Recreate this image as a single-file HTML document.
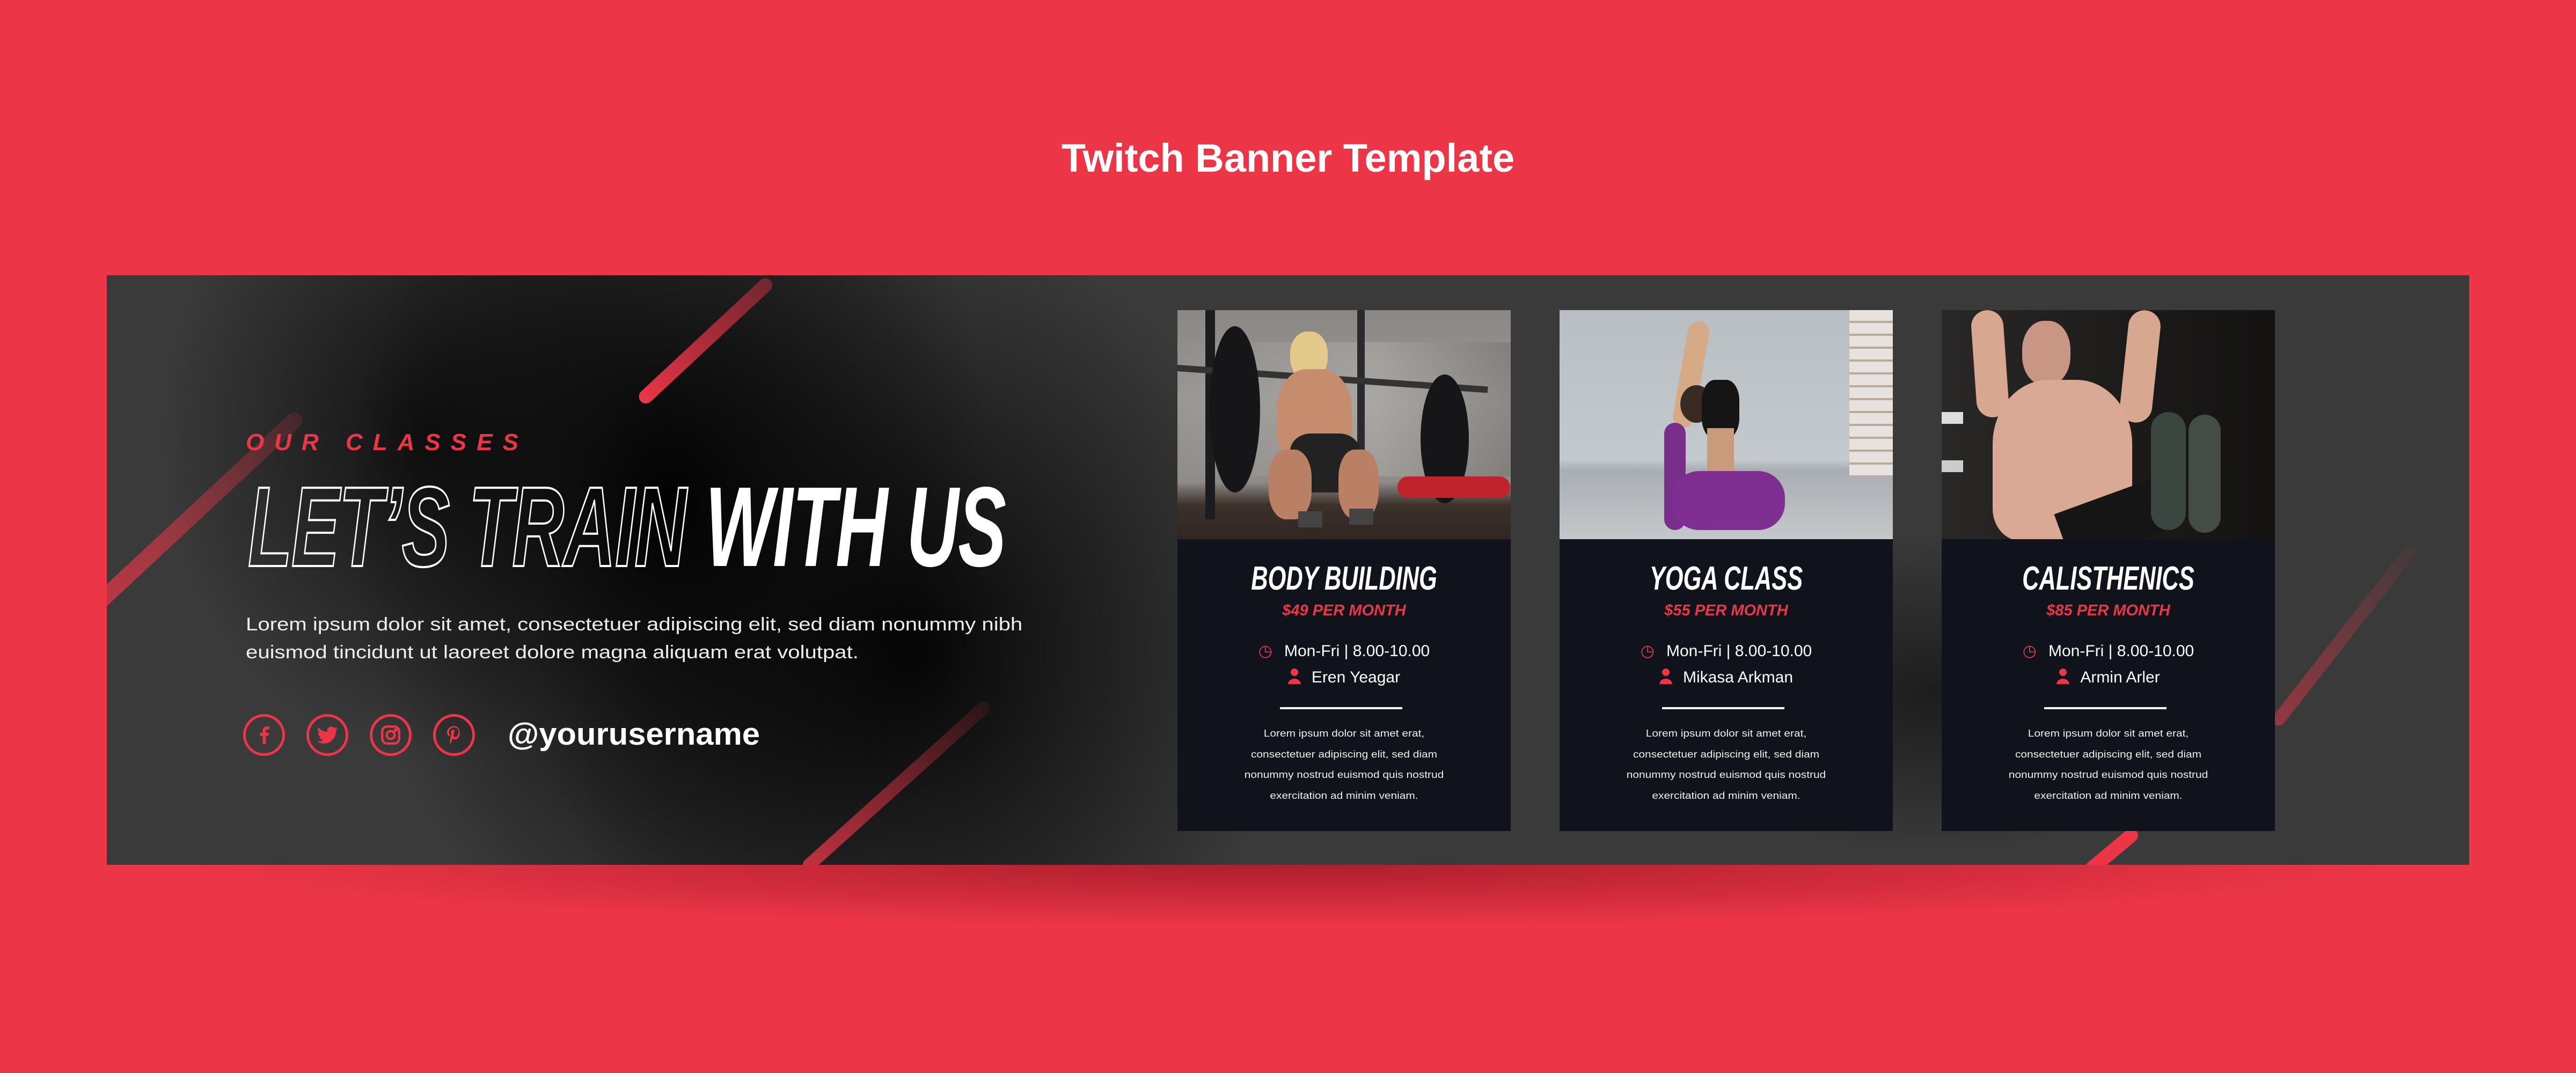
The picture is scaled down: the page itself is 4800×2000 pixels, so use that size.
<!DOCTYPE html>
<html><head><meta charset="utf-8">
<style>
*{margin:0;padding:0;box-sizing:border-box}
html,body{width:4800px;height:2000px;overflow:hidden;background:#ec3648;font-family:"Liberation Sans",sans-serif}
.title{position:absolute;left:0;width:4800px;top:252px;text-align:center;color:#fff;font-weight:bold;font-size:74px}
.shadow{position:absolute;left:300px;top:1560px;width:4200px;height:170px;background:radial-gradient(ellipse at 50% 30%,rgba(120,10,20,.55),rgba(120,10,20,0) 70%)}
.banner{position:absolute;left:199px;top:513px;width:4402px;height:1099px;overflow:hidden;
background:
radial-gradient(ellipse 600px 900px at 1050px 420px,rgba(0,0,0,.95),rgba(0,0,0,0) 100%),
radial-gradient(ellipse 700px 800px at 1500px 700px,rgba(0,0,0,.9),rgba(0,0,0,0) 100%),
radial-gradient(ellipse 500px 600px at 600px 300px,rgba(0,0,0,.7),rgba(0,0,0,0) 100%),
radial-gradient(ellipse 500px 300px at 3400px 780px,rgba(0,0,0,.5),rgba(0,0,0,0) 100%),
#3a3a3a}
.stripe{position:absolute;border-radius:20px;transform-origin:0 50%}
.oc{position:absolute;left:458px;top:800px;color:#ec3648;font-weight:bold;font-style:italic;font-size:44px;letter-spacing:19px}
.hl{position:absolute;left:462px;top:860px;font-weight:bold;font-style:italic;font-size:212px;white-space:nowrap;transform:scaleX(.635);transform-origin:0 0;letter-spacing:-2px}
.hl .o{color:transparent;-webkit-text-stroke:4px #fff}
.hl .w{color:#fff}
.para{position:absolute;left:458px;top:1138px;color:#eee;font-size:34px;line-height:52px;white-space:nowrap;transform:scaleX(1.18);transform-origin:0 0}
.ic{position:absolute;top:1331px;width:78px;height:78px;border:5px solid #ec3648;border-radius:50%;display:flex;align-items:center;justify-content:center}
.user{position:absolute;left:946px;top:1335px;color:#fff;font-size:58px;font-weight:bold;transform:scaleX(1.03);transform-origin:0 0}
.card{position:absolute;top:578px;width:621px;height:971px;background:#10131b;color:#fff;text-align:center}
.ph{position:absolute;left:0;top:0;width:621px;height:427px;overflow:hidden}
.ct{position:absolute;top:465px;left:0;width:621px;font-weight:bold;font-style:italic;font-size:62px;transform:scaleX(.7);white-space:nowrap}
.pr{position:absolute;top:544px;left:0;width:621px;color:#ec3648;font-weight:bold;font-style:italic;font-size:29px}
.ln{position:absolute;left:0;width:621px;font-size:30px;white-space:nowrap}
.hr{position:absolute;top:740px;left:191px;width:228px;height:4px;background:#fff}
.lo{position:absolute;top:770px;left:0;width:621px;font-size:18px;line-height:38.5px;color:#eee;transform:scaleX(1.16)}
</style></head><body>
<div class="title">Twitch Banner Template</div>
<div class="shadow"></div>
<div class="banner">
 <div class="stripe" style="left:-20px;top:600px;width:520px;height:30px;background:linear-gradient(90deg,rgba(236,54,72,.75),rgba(236,54,72,.15));transform:rotate(-43deg)"></div>
 <div class="stripe" style="left:995px;top:222px;width:330px;height:26px;background:linear-gradient(90deg,#ec3648,rgba(236,54,72,.4));transform:rotate(-43deg)"></div>
 <div class="stripe" style="left:1300px;top:1095px;width:460px;height:24px;background:linear-gradient(90deg,rgba(236,54,72,.8),rgba(236,54,72,.1));transform:rotate(-42deg)"></div>
 <div class="stripe" style="left:3690px;top:1100px;width:120px;height:26px;background:#ec3648;transform:rotate(-40deg)"></div>
 <div class="stripe" style="left:4040px;top:825px;width:420px;height:24px;background:linear-gradient(90deg,rgba(236,54,72,.5),rgba(236,54,72,.05));transform:rotate(-52deg)"></div>
</div>
<div class="oc">OUR CLASSES</div>
<div class="hl"><span class="o">LET’S TRAIN</span> <span class="w">WITH US</span></div>
<div class="para">Lorem ipsum dolor sit amet, consectetuer adipiscing elit, sed diam nonummy nibh<br>euismod tincidunt ut laoreet dolore magna aliquam erat volutpat.</div>
<div class="ic" style="left:453px"><svg width="40" height="44" viewBox="0 0 24 24"><path d="M14 22V13h3l.5-3.5H14V7.5c0-1 .3-1.7 1.8-1.7H18V2.6C17.6 2.5 16.5 2.4 15.2 2.4 12.6 2.4 10.5 4 10.5 7v2.5H7.5V13h3v9z" fill="#ec3648"/></svg></div>
<div class="ic" style="left:571px"><svg width="46" height="46" viewBox="0 0 24 24"><path d="M22 5.8c-.7.3-1.5.5-2.4.6.9-.5 1.5-1.3 1.8-2.3-.8.5-1.7.8-2.6 1-1.6-1.7-4.3-1.7-5.9 0-1 1-1.4 2.4-1.1 3.8-3.3-.2-6.4-1.7-8.5-4.300-1.1 1.9-.5 4.3 1.3 5.5-.7 0-1.3-.2-1.9-.5 0 2 1.4 3.7 3.3 4.1-.6.2-1.2.2-1.9.1.5 1.7 2.1 2.8 3.9 2.9-1.7 1.3-3.9 2-6 1.7 1.9 1.2 4.1 1.9 6.4 1.9 7.7 0 11.9-6.4 11.9-11.9v-.5c.8-.6 1.5-1.3 2-2.1z" fill="#ec3648"/></svg></div>
<div class="ic" style="left:689px"><svg width="42" height="42" viewBox="0 0 24 24" fill="none" stroke="#ec3648" stroke-width="2.4"><rect x="3" y="3" width="18" height="18" rx="5"/><circle cx="12" cy="12" r="4.2"/><circle cx="17.3" cy="6.7" r=".8" fill="#ec3648"/></svg></div>
<div class="ic" style="left:807px"><svg width="40" height="44" viewBox="0 0 24 24"><path d="M12.3 2C6.9 2 4.2 5.8 4.2 9c0 1.9.7 3.6 2.3 4.3.3.1.5 0 .6-.3l.2-.9c.1-.3 0-.4-.2-.7-.5-.6-.8-1.3-.8-2.3 0-3 2.2-5.6 5.8-5.6 3.2 0 4.900 1.9 4.900 4.5 0 3.4-1.5 6.3-3.7 6.3-1.2 0-2.2-1-1.9-2.3.4-1.5 1.1-3.1 1.1-4.2 0-1-.5-1.8-1.6-1.8-1.2 0-2.3 1.3-2.3 3 0 1.1.4 1.8.4 1.8L7.5 17.6c-.4 1.8-.1 4 0 4.2 0 .1.2.2.3.1.1-.1 1.4-1.7 1.8-3.4l.7-2.7c.4.7 1.4 1.3 2.5 1.3 3.3 0 5.6-3 5.6-7.1C18.4 5 15.8 2 12.3 2z" fill="#ec3648"/></svg></div>
<div class="user">@yourusername</div>

<div class="card" style="left:2194px">
 <div class="ph" style="background:linear-gradient(180deg,#8a8785 0%,#9a9794 40%,#8e8b88 75%,#3d302a 85%,#2f2622 100%)">
  <div style="position:absolute;left:0;top:60px;width:621px;height:250px;background:linear-gradient(90deg,rgba(0,0,0,0),rgba(255,255,255,.15) 60%,rgba(0,0,0,.1))"></div>
  <div style="position:absolute;left:52px;top:0;width:18px;height:390px;background:#1c1c1e"></div>
  <div style="position:absolute;left:335px;top:0;width:14px;height:300px;background:#2a2a2c"></div>
  <div style="position:absolute;left:0;top:102px;width:580px;height:12px;background:#333;transform:rotate(4deg);transform-origin:0 0"></div>
  <div style="position:absolute;left:60px;top:30px;width:94px;height:310px;border-radius:50%;background:#161618"></div>
  <div style="position:absolute;left:453px;top:120px;width:90px;height:240px;border-radius:50%;background:#161618"></div>
  <div style="position:absolute;left:210px;top:40px;width:70px;height:90px;border-radius:45%;background:#e3c98a"></div>
  <div style="position:absolute;left:185px;top:110px;width:140px;height:190px;border-radius:40%;background:#c58d6e"></div>
  <div style="position:absolute;left:210px;top:230px;width:130px;height:110px;border-radius:30%;background:#222"></div>
  <div style="position:absolute;left:170px;top:260px;width:80px;height:130px;border-radius:40%;background:#b98065"></div>
  <div style="position:absolute;left:300px;top:260px;width:75px;height:130px;border-radius:40%;background:#b98065"></div>
  <div style="position:absolute;left:225px;top:375px;width:45px;height:30px;background:#444"></div>
  <div style="position:absolute;left:320px;top:370px;width:45px;height:30px;background:#444"></div>
  <div style="position:absolute;left:410px;top:310px;width:210px;height:40px;border-radius:20px;background:#c0232b"></div>
 </div>
 <div class="ct">BODY BUILDING</div>
 <div class="pr">$49 PER MONTH</div>
 <div class="ln" style="top:618px"><span style="color:#ec3648;margin-right:22px">◷</span>Mon-Fri | 8.00-10.00</div>
 <div class="ln" style="top:667px"><span style="display:inline-block;width:24px;height:30px;margin-right:20px;vertical-align:-3px;background:radial-gradient(circle 7px at 12px 8px,#ec3648 98%,transparent 100%),radial-gradient(ellipse 12px 10px at 12px 30px,#ec3648 98%,transparent 100%)"></span>Eren Yeagar</div>
 <div class="hr"></div>
 <div class="lo">Lorem ipsum dolor sit amet erat,<br>consectetuer adipiscing elit, sed diam<br>nonummy nostrud euismod quis nostrud<br>exercitation ad minim veniam.</div>
</div>

<div class="card" style="left:2906px">
 <div class="ph" style="background:linear-gradient(180deg,#b9bec2 0%,#c4c9cd 65%,#a9aeb2 70%,#c5c8cb 100%)">
  <div style="position:absolute;left:540px;top:0;width:81px;height:310px;background:repeating-linear-gradient(180deg,#e8e2de 0 20px,#b9a9a3 20px 24px)"></div>
  <div style="position:absolute;left:225px;top:20px;width:40px;height:200px;border-radius:20px;background:#d6a987;transform:rotate(10deg)"></div>
  <div style="position:absolute;left:225px;top:140px;width:60px;height:70px;border-radius:50%;background:#3a2a24"></div>
  <div style="position:absolute;left:265px;top:130px;width:70px;height:110px;border-radius:35%;background:#151515"></div>
  <div style="position:absolute;left:275px;top:220px;width:50px;height:90px;background:#c99b7c"></div>
  <div style="position:absolute;left:195px;top:210px;width:40px;height:200px;border-radius:20px;background:#7a2e8c"></div>
  <div style="position:absolute;left:210px;top:300px;width:210px;height:110px;border-radius:50px;background:#7f2f92"></div>
 </div>
 <div class="ct">YOGA CLASS</div>
 <div class="pr">$55 PER MONTH</div>
 <div class="ln" style="top:618px"><span style="color:#ec3648;margin-right:22px">◷</span>Mon-Fri | 8.00-10.00</div>
 <div class="ln" style="top:667px"><span style="display:inline-block;width:24px;height:30px;margin-right:20px;vertical-align:-3px;background:radial-gradient(circle 7px at 12px 8px,#ec3648 98%,transparent 100%),radial-gradient(ellipse 12px 10px at 12px 30px,#ec3648 98%,transparent 100%)"></span>Mikasa Arkman</div>
 <div class="hr"></div>
 <div class="lo">Lorem ipsum dolor sit amet erat,<br>consectetuer adipiscing elit, sed diam<br>nonummy nostrud euismod quis nostrud<br>exercitation ad minim veniam.</div>
</div>

<div class="card" style="left:3618px">
 <div class="ph" style="background:linear-gradient(90deg,#2a2826,#1b1a19 60%,#141312)">
  <div style="position:absolute;left:0;top:190px;width:40px;height:22px;background:#ddd"></div>
  <div style="position:absolute;left:0;top:280px;width:40px;height:22px;background:#ccc"></div>
  <div style="position:absolute;left:60px;top:0;width:60px;height:200px;border-radius:30px;background:#d7a78f;transform:rotate(-4deg)"></div>
  <div style="position:absolute;left:340px;top:0;width:60px;height:210px;border-radius:30px;background:#d7a78f;transform:rotate(6deg)"></div>
  <div style="position:absolute;left:150px;top:20px;width:90px;height:120px;border-radius:45%;background:#c99585"></div>
  <div style="position:absolute;left:95px;top:130px;width:260px;height:300px;border-radius:40% 40% 20% 20%;background:#d9a996"></div>
  <div style="position:absolute;left:220px;top:340px;width:220px;height:100px;background:#151515;transform:rotate(-20deg)"></div>
  <div style="position:absolute;left:390px;top:190px;width:65px;height:220px;border-radius:35px;background:#3c4640"></div>
  <div style="position:absolute;left:460px;top:195px;width:60px;height:220px;border-radius:35px;background:#434d46"></div>
 </div>
 <div class="ct">CALISTHENICS</div>
 <div class="pr">$85 PER MONTH</div>
 <div class="ln" style="top:618px"><span style="color:#ec3648;margin-right:22px">◷</span>Mon-Fri | 8.00-10.00</div>
 <div class="ln" style="top:667px"><span style="display:inline-block;width:24px;height:30px;margin-right:20px;vertical-align:-3px;background:radial-gradient(circle 7px at 12px 8px,#ec3648 98%,transparent 100%),radial-gradient(ellipse 12px 10px at 12px 30px,#ec3648 98%,transparent 100%)"></span>Armin Arler</div>
 <div class="hr"></div>
 <div class="lo">Lorem ipsum dolor sit amet erat,<br>consectetuer adipiscing elit, sed diam<br>nonummy nostrud euismod quis nostrud<br>exercitation ad minim veniam.</div>
</div>
</body></html>
